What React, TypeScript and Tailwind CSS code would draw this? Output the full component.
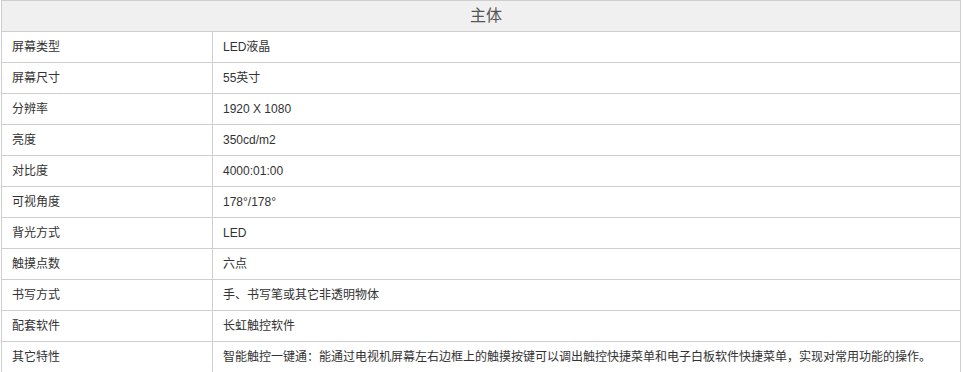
import React from "react";

const rows: [string, string][] = [
  ["屏幕类型", "LED液晶"],
  ["屏幕尺寸", "55英寸"],
  ["分辨率", "1920 X 1080"],
  ["亮度", "350cd/m2"],
  ["对比度", "4000:01:00"],
  ["可视角度", "178°/178°"],
  ["背光方式", "LED"],
  ["触摸点数", "六点"],
  ["书写方式", "手、书写笔或其它非透明物体"],
  ["配套软件", "长虹触控软件"],
  [
    "其它特性",
    "智能触控一键通：能通过电视机屏幕左右边框上的触摸按键可以调出触控快捷菜单和电子白板软件快捷菜单，实现对常用功能的操作。",
  ],
];

export default function App() {
  return (
    <div
      className="w-[963px] h-[372px] overflow-hidden bg-white pl-[1px]"
      style={{ fontFamily: '"Liberation Sans", Arial, "Noto Sans CJK SC", sans-serif' }}
    >
      <table className="w-[960px] border-collapse table-fixed">
        <colgroup>
          <col className="w-[211px]" />
          <col />
        </colgroup>
        <thead>
          <tr className="h-[31px]">
            <th
              colSpan={2}
              className="border border-[#cfcfcf] bg-[#f0f0f0] text-[16px] font-normal text-[#555] text-center pl-[10px] leading-[30px] p-0"
            >
              主体
            </th>
          </tr>
        </thead>
        <tbody>
          {rows.map(([k, v]) => (
            <tr key={k} className="h-[31px]">
              <td className="border border-[#cfcfcf] px-[10px] py-0 text-[12px] text-[#333] leading-[30px] whitespace-nowrap">
                {k}
              </td>
              <td className="border border-[#cfcfcf] px-[10px] py-0 text-[12px] text-[#333] leading-[30px] whitespace-nowrap">
                {v}
              </td>
            </tr>
          ))}
        </tbody>
      </table>
    </div>
  );
}
